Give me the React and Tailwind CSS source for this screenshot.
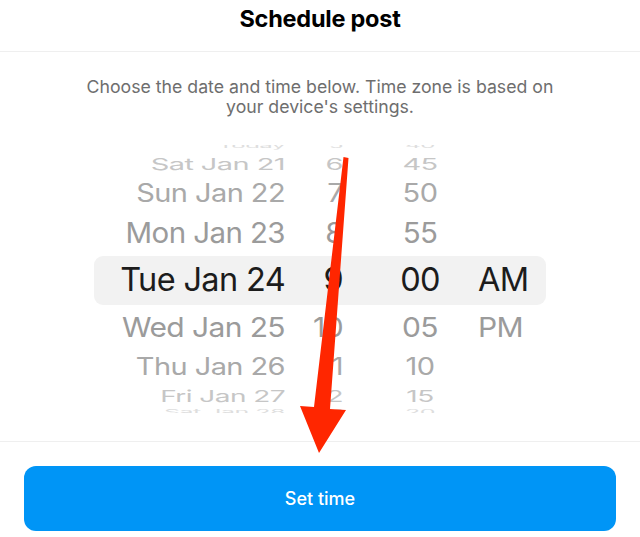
import React from "react";

const rows = [
  { d: "Today", h: "5", m: "40", ap: "", row: "h-[16px] -mt-[7px]", fs: "text-[24px]", sc: "scale-y-[0.3]", col: "text-[#dedede]" },
  { d: "Sat Jan 21", h: "6", m: "45", ap: "", row: "h-[21px]", fs: "text-[29px]", sc: "scale-y-[0.57]", col: "text-[#c6c6c6]" },
  { d: "Sun Jan 22", h: "7", m: "50", ap: "", row: "h-[35px]", fs: "text-[29px]", sc: "scale-y-[0.87]", col: "text-[#a9a9a9]" },
  { d: "Mon Jan 23", h: "8", m: "55", ap: "", row: "h-[46px]", fs: "text-[29.5px]", sc: "scale-y-[0.97]", col: "text-[#9b9b9b]" },
  { d: "Tue Jan 24", h: "9", m: "00", ap: "AM", row: "h-[49px]", fs: "text-[32.5px]", sc: "scale-y-[1]", col: "text-[#1c1c1c]", sel: true },
  { d: "Wed Jan 25", h: "10", m: "05", ap: "PM", row: "h-[44px]", fs: "text-[30px]", sc: "scale-y-[0.92]", col: "text-[#9b9b9b]" },
  { d: "Thu Jan 26", h: "11", m: "10", ap: "", row: "h-[35px]", fs: "text-[29px]", sc: "scale-y-[0.82]", col: "text-[#a9a9a9]" },
  { d: "Fri Jan 27", h: "12", m: "15", ap: "", row: "h-[24px]", fs: "text-[28px]", sc: "scale-y-[0.59]", col: "text-[#c6c6c6]" },
  { d: "Sat Jan 28", h: "1", m: "20", ap: "", row: "h-[8px]", fs: "text-[25px]", sc: "scale-y-[0.3]", col: "text-[#dedede]" },
];

function Row({ r }) {
  return (
    <div
      className={`${r.row} shrink-0 flex items-center mx-[94px] ${
        r.sel ? "bg-[#f2f2f2] rounded-[9px]" : ""
      }`}
    >
      <div
        className={`flex w-full items-center ${r.fs} ${r.sc} ${r.col} leading-none tracking-[-0.02em] whitespace-nowrap`}
      >
        <div className="w-[191px] text-right">{r.d}</div>
        <div className="w-[58px] text-right">{r.h}</div>
        <div className="w-[37px]" />
        <div className="w-[80px] text-center">{r.m}</div>
        <div className="w-[18px]" />
        <div className="flex-1 text-left">{r.ap}</div>
      </div>
    </div>
  );
}

export default function App() {
  return (
    <div
      className="relative w-[640px] h-[537px] bg-white overflow-hidden"
      style={{ fontFamily: "Inter, 'Noto Sans', sans-serif" }}
    >
      <div className="h-[52px] border-b border-[#efefef] flex justify-center pt-[5px]">
        <h1 className="text-[23.5px] leading-[28px] font-bold text-black tracking-[-0.01em]">
          Schedule post
        </h1>
      </div>
      <p className="mt-[25px] text-center text-[17.7px] leading-[20px] text-[#6e6e6e]">
        Choose the date and time below. Time zone is based on
        <br />
        your device's settings.
      </p>
      <div className="mt-[28px] h-[268px] overflow-hidden flex flex-col">
        {rows.map((r, i) => (
          <Row key={i} r={r} />
        ))}
      </div>
      <div className="mt-[28px] border-t border-[#efefef]" />
      <div className="px-[24px] pt-[24px]">
        <button className="w-full h-[65px] rounded-[12px] bg-[#0095f6] text-white text-[18px] font-medium flex items-center justify-center">
          Set time
        </button>
      </div>
      <svg
        className="absolute inset-0 pointer-events-none"
        width="640"
        height="537"
        viewBox="0 0 640 537"
      >
        <polygon
          points="343.5,157 348.5,158 330,409 346,410 319,453 300,406 314,407"
          fill="#ff2600"
        />
      </svg>
    </div>
  );
}
